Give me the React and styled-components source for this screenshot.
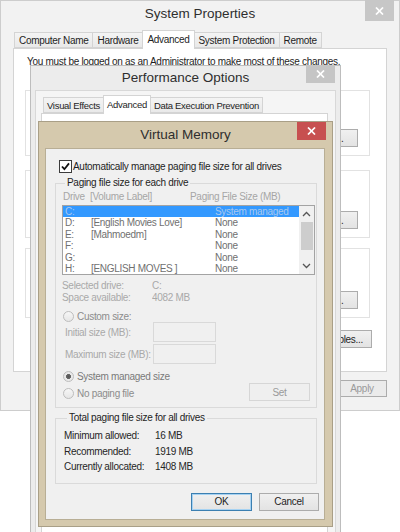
import React from 'react'
import styled, { createGlobalStyle } from 'styled-components'

const GlobalStyle = createGlobalStyle`
  html, body {
    margin: 0;
    padding: 0;
    background: #ffffff;
  }
  body {
    font-family: "Liberation Sans", Arial, sans-serif;
    font-size: 10px;
    letter-spacing: -0.3px;
    color: #1e1e1e;
  }
  * {
    box-sizing: border-box;
  }
`

const drives = [
  { letter: 'C:', label: '', size: 'System managed' },
  { letter: 'D:', label: '[English Movies Love]', size: 'None' },
  { letter: 'E:', label: '[Mahmoedm]', size: 'None' },
  { letter: 'F:', label: '', size: 'None' },
  { letter: 'G:', label: '', size: 'None' },
  { letter: 'H:', label: '[ENGLISH MOVES ]', size: 'None' },
]

const totals = [
  ['Minimum allowed:', '16 MB'],
  ['Recommended:', '1919 MB'],
  ['Currently allocated:', '1408 MB'],
]

export default function App() {
  return (
    <>
      <GlobalStyle />
      <Desktop>
        <Window $x={0} $y={0} $w={400} $h={411} $frame="#f2f2f2" $edge="#cdcdcd">
          <TitleBar $h={29} $pad={5}>
            <Title>System Properties</Title>
            <CloseButton $top={-1} $right={5} $height={21} $bg="#c7c7c7">
              <CloseIcon />
            </CloseButton>
          </TitleBar>
          <TabStrip $pad={13}>
            <Tab>Computer Name</Tab>
            <Tab>Hardware</Tab>
            <Tab $active>Advanced</Tab>
            <Tab>System Protection</Tab>
            <Tab>Remote</Tab>
          </TabStrip>
          <SysPanel>
            <Notice>You must be logged on as an Administrator to make most of these changes.</Notice>
            <SysGroup $mt={22} $h={66}>
              <PushButton $w={70}>Settings...</PushButton>
            </SysGroup>
            <SysGroup $mt={14} $h={68}>
              <PushButton $w={70}>Settings...</PushButton>
            </SysGroup>
            <SysGroup $mt={10} $h={70}>
              <PushButton $w={70}>Settings...</PushButton>
            </SysGroup>
            <EnvRow>
              <PushButton>Environment Variables...</PushButton>
            </EnvRow>
          </SysPanel>
          <DialogButtons $mt={8} $mr={12} $gap={6}>
            <PushButton $w={50} $h={17}>OK</PushButton>
            <PushButton $w={50} $h={17}>Cancel</PushButton>
            <PushButton $w={50} $h={17} $disabled>Apply</PushButton>
          </DialogButtons>
        </Window>

        <Window $x={30} $y={65} $w={311} $h={480} $frame="#ececec" $edge="#bdbdbd">
          <TitleBar $h={24} $pad={4}>
            <Title>Performance Options</Title>
            <CloseButton $top={-1} $right={5} $height={18} $bg="#c5c5c5">
              <CloseIcon />
            </CloseButton>
          </TitleBar>
          <PerfClient>
            <TabStrip $pad={2} $small>
              <Tab $small>Visual Effects</Tab>
              <Tab $small $active>Advanced</Tab>
              <Tab $small>Data Execution Prevention</Tab>
            </TabStrip>
            <PerfPanel />
          </PerfClient>
        </Window>

        <Window $x={38} $y={121} $w={295} $h={406} $frame="#d5c9ad" $edge="#a99f87">
          <TitleBar $h={26} $pad={5}>
            <Title>Virtual Memory</Title>
            <CloseButton $top={0} $right={6} $height={18} $bg="#c75050">
              <CloseIcon />
            </CloseButton>
          </TitleBar>
          <VmClient>
            <CheckRow>
              <CheckBox>
                <svg width="11" height="11" viewBox="0 0 11 11">
                  <polyline points="2,5.5 4.4,8.2 9,2.4" fill="none" stroke="#111" strokeWidth="1.8" />
                </svg>
              </CheckBox>
              <span>Automatically manage paging file size for all drives</span>
            </CheckRow>

            <GroupBox $pad="2px 1px 6px 6px">
              <Legend>Paging file size for each drive</Legend>
              <HeaderRow>
                <Col $w={28} $pl={1}>Drive</Col>
                <Col $w={100}>[Volume Label]</Col>
                <Col>Paging File Size (MB)</Col>
              </HeaderRow>
              <ListBox>
                <Rows>
                  {drives.map((d, i) => (
                    <DriveRow key={d.letter} $selected={i === 0}>
                      <Col $w={26}>{d.letter}</Col>
                      <Col $w={124}>{d.label}</Col>
                      <Col>{d.size}</Col>
                    </DriveRow>
                  ))}
                </Rows>
                <ScrollBar>
                  <ScrollArrow>
                    <svg width="9" height="6" viewBox="0 0 9 6">
                      <polyline points="1,5 4.5,1.5 8,5" fill="none" stroke="#555" strokeWidth="1.3" />
                    </svg>
                  </ScrollArrow>
                  <ScrollTrack>
                    <Thumb />
                  </ScrollTrack>
                  <ScrollArrow>
                    <svg width="9" height="6" viewBox="0 0 9 6">
                      <polyline points="1,1 4.5,4.5 8,1" fill="none" stroke="#555" strokeWidth="1.3" />
                    </svg>
                  </ScrollArrow>
                </ScrollBar>
              </ListBox>

              <InfoBlock>
                <InfoRow>
                  <Col $w={90}>Selected drive:</Col>
                  <Col>C:</Col>
                </InfoRow>
                <InfoRow>
                  <Col $w={90}>Space available:</Col>
                  <Col>4082 MB</Col>
                </InfoRow>
              </InfoBlock>

              <RadioRow $mt={6}>
                <Radio />
                <RadioLabel $color="#8c8c8c">Custom size:</RadioLabel>
              </RadioRow>
              <SizeRow $mt={0}>
                <SizeLabel>Initial size (MB):</SizeLabel>
                <SizeInput />
              </SizeRow>
              <SizeRow $mt={2}>
                <SizeLabel>Maximum size (MB):</SizeLabel>
                <SizeInput />
              </SizeRow>

              <BottomRow>
                <RadioColumn>
                  <RadioRow $mt={0}>
                    <Radio $checked />
                    <RadioLabel $color="#7a7a7a">System managed size</RadioLabel>
                  </RadioRow>
                  <RadioRow $mt={5}>
                    <Radio />
                    <RadioLabel $color="#8c8c8c">No paging file</RadioLabel>
                  </RadioRow>
                </RadioColumn>
                <PushButton $w={61} $h={18} $disabled $flat>Set</PushButton>
              </BottomRow>
            </GroupBox>

            <GroupBox $pad="4px 0 8px 8px" $mt={4}>
              <Legend>Total paging file size for all drives</Legend>
              {totals.map(([label, value]) => (
                <TotalRow key={label}>
                  <Col $w={91}>{label}</Col>
                  <Col>{value}</Col>
                </TotalRow>
              ))}
            </GroupBox>

            <DialogButtons $mt={9} $mr={-1} $gap={7}>
              <PushButton $w={61} $h={18} $default>OK</PushButton>
              <PushButton $w={60} $h={18}>Cancel</PushButton>
            </DialogButtons>
          </VmClient>
        </Window>
      </Desktop>
    </>
  )
}

function CloseIcon() {
  return (
    <svg width="9" height="8" viewBox="0 0 9 8">
      <line x1="1" y1="0.5" x2="8" y2="7.5" stroke="#fff" strokeWidth="1.7" />
      <line x1="8" y1="0.5" x2="1" y2="7.5" stroke="#fff" strokeWidth="1.7" />
    </svg>
  )
}

const Desktop = styled.div`
  position: relative;
  width: 400px;
  height: 532px;
  overflow: hidden;
  background: #ffffff;
`

const Window = styled.div`
  position: absolute;
  left: ${(p) => p.$x}px;
  top: ${(p) => p.$y}px;
  width: ${(p) => p.$w}px;
  height: ${(p) => p.$h}px;
  background: ${(p) => p.$frame};
  border: 1px solid ${(p) => p.$edge};
  display: flex;
  flex-direction: column;
`

const TitleBar = styled.div`
  position: relative;
  flex: 0 0 ${(p) => p.$h}px;
  padding-top: ${(p) => p.$pad}px;
  display: flex;
  justify-content: center;
`

const Title = styled.div`
  font-size: 13.5px;
  line-height: 16px;
  letter-spacing: 0;
  color: #2e2e2e;
`

const CloseButton = styled.div`
  position: absolute;
  top: ${(p) => p.$top}px;
  right: ${(p) => p.$right}px;
  width: 29px;
  height: ${(p) => p.$height}px;
  background: ${(p) => p.$bg};
  display: flex;
  align-items: center;
  justify-content: center;
`

const TabStrip = styled.div`
  flex: 0 0 18px;
  display: flex;
  align-items: flex-end;
  padding-left: ${(p) => p.$pad}px;
  position: relative;
  z-index: 1;
`

const Tab = styled.div`
  height: ${(p) => (p.$active ? 19 : 16)}px;
  margin-bottom: ${(p) => (p.$active ? -1 : 0)}px;
  padding: 0 ${(p) => (p.$small ? 3 : 4)}px;
  padding-top: ${(p) => (p.$active ? 2 : 1)}px;
  font-size: ${(p) => (p.$small ? 9.5 : 10)}px;
  line-height: 13px;
  border: 1px solid #d4d4d4;
  border-bottom: ${(p) => (p.$active ? 'none' : '1px solid #d4d4d4')};
  background: ${(p) => (p.$active ? '#ffffff' : 'linear-gradient(#f4f4f4, #e9e9e9)')};
  color: #1e1e1e;
  white-space: nowrap;

  & + & {
    margin-left: -1px;
  }
`

const SysPanel = styled.div`
  flex: 0 0 324px;
  margin: 0 12px;
  background: #ffffff;
  border: 1px solid #d4d4d4;
  padding: 7px 16px 0 11px;
  display: flex;
  flex-direction: column;
`

const Notice = styled.div`
  line-height: 12px;
  margin-left: 2px;
  white-space: nowrap;
`

const SysGroup = styled.div`
  margin-top: ${(p) => p.$mt}px;
  height: ${(p) => p.$h}px;
  border: 1px solid #e2e2e2;
  background: #ffffff;
  display: flex;
  flex-direction: column;
  justify-content: flex-end;
  align-items: flex-end;
  padding: 0 11px 8px;
`

const EnvRow = styled.div`
  display: flex;
  justify-content: flex-end;
  margin: 12px -2px 0 0;
`

const PushButton = styled.div`
  width: ${(p) => (p.$w ? `${p.$w}px` : 'auto')};
  height: ${(p) => p.$h || 18}px;
  padding: 0 ${(p) => (p.$w ? 0 : 8)}px;
  display: flex;
  align-items: center;
  justify-content: center;
  white-space: nowrap;
  border: 1px solid ${(p) => (p.$default ? '#3c7fb1' : p.$flat ? '#d6d6d6' : '#acacac')};
  background: ${(p) =>
    p.$flat ? '#efefef' : p.$disabled ? '#ebebeb' : 'linear-gradient(#f0f0f0, #e3e3e3)'};
  color: ${(p) => (p.$disabled ? '#9a9a9a' : '#1e1e1e')};
  box-shadow: ${(p) => (p.$default ? 'inset 0 0 0 1px #a6d2f2' : 'none')};
`

const DialogButtons = styled.div`
  display: flex;
  justify-content: flex-end;
  gap: ${(p) => p.$gap}px;
  margin-top: ${(p) => p.$mt}px;
  margin-right: ${(p) => p.$mr}px;
`

const PerfClient = styled.div`
  flex: 1;
  margin: 0 4px;
  background: #f5f5f5;
  border: 1px solid #d8d8d8;
  padding: 4px 7px 0 5px;
  display: flex;
  flex-direction: column;
`

const PerfPanel = styled.div`
  flex: 1;
  background: #ffffff;
  border: 1px solid #d4d4d4;
`

const VmClient = styled.div`
  flex: 1;
  margin: 0 7px 6px 6px;
  background: #f0f0f0;
  border: 1px solid #b8ae95;
  padding: 11px 6px 0 9px;
  display: flex;
  flex-direction: column;
`

const CheckRow = styled.div`
  display: flex;
  align-items: center;
  height: 13px;
  padding-left: 4px;
  gap: 1px;
  line-height: 13px;
  white-space: nowrap;
`

const CheckBox = styled.div`
  width: 13px;
  height: 13px;
  border: 1px solid #3c3c3c;
  background: #ffffff;
  display: flex;
  align-items: center;
  justify-content: center;
`

const GroupBox = styled.fieldset`
  margin: ${(p) => p.$mt || 4}px 1px 0 0;
  padding: ${(p) => p.$pad};
  border: 1px solid #dadada;
  min-width: 0;
`

const Legend = styled.legend`
  margin-left: 3px;
  padding: 0 2px;
  line-height: 12px;
  color: #1e1e1e;
  white-space: nowrap;
`

const HeaderRow = styled.div`
  display: flex;
  line-height: 12px;
  color: #a6a6a6;
  white-space: nowrap;
`

const Col = styled.div`
  flex: ${(p) => (p.$w ? `0 0 ${p.$w}px` : '1')};
  padding-left: ${(p) => p.$pl || 0}px;
  white-space: nowrap;
  overflow: hidden;
`

const ListBox = styled.div`
  margin-top: 2px;
  height: 70px;
  border: 1px solid #a3a3a3;
  background: #ffffff;
  display: flex;
`

const Rows = styled.div`
  flex: 1;
`

const DriveRow = styled.div`
  display: flex;
  height: 11.4px;
  line-height: 11.4px;
  padding-left: 2px;
  background: ${(p) => (p.$selected ? '#3399ff' : 'transparent')};
  color: ${(p) => (p.$selected ? '#a9c8ee' : '#707070')};
`

const ScrollBar = styled.div`
  flex: 0 0 15px;
  background: #f0f0f0;
  display: flex;
  flex-direction: column;
`

const ScrollArrow = styled.div`
  flex: 0 0 16px;
  display: flex;
  align-items: center;
  justify-content: center;
`

const ScrollTrack = styled.div`
  flex: 1;
  padding: 0 1px 0 2px;
`

const Thumb = styled.div`
  height: 28px;
  background: #cdcdcd;
`

const InfoBlock = styled.div`
  margin-top: 5px;
  color: #a9a9a9;
`

const InfoRow = styled.div`
  display: flex;
  line-height: 12px;
`

const RadioRow = styled.div`
  display: flex;
  align-items: center;
  height: 12px;
  margin-top: ${(p) => p.$mt}px;
  padding-left: 1px;
`

const Radio = styled.div`
  width: 11px;
  height: 11px;
  border-radius: 50%;
  border: 1px solid #bdbdbd;
  background: ${(p) =>
    p.$checked
      ? 'radial-gradient(circle, #555 0, #666 2.2px, #e9e9e9 2.8px)'
      : 'linear-gradient(#f6f6f6, #e6e6e6)'};
`

const RadioLabel = styled.span`
  margin-left: 3px;
  color: ${(p) => p.$color};
  white-space: nowrap;
`

const SizeRow = styled.div`
  display: flex;
  align-items: center;
  height: 20px;
  margin-top: ${(p) => p.$mt}px;
  padding-left: 3px;
`

const SizeLabel = styled.div`
  flex: 0 0 88px;
  color: #a9a9a9;
  white-space: nowrap;
`

const SizeInput = styled.div`
  width: 63px;
  height: 20px;
  border: 1px solid #d9d9d9;
  background: #f0f0f0;
`

const BottomRow = styled.div`
  display: flex;
  align-items: flex-end;
  justify-content: space-between;
  margin-top: 6px;
  padding-right: 5px;
`

const RadioColumn = styled.div`
  padding-bottom: 2px;
`

const TotalRow = styled.div`
  display: flex;
  line-height: 15.5px;
  color: #262626;
`
